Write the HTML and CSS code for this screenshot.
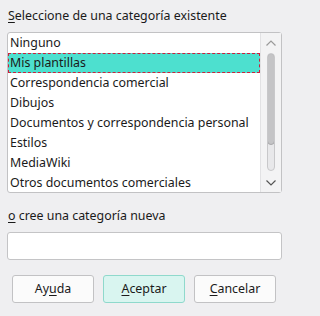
FILE: index.html
```html
<!DOCTYPE html>
<html lang="es">
<head>
<meta charset="utf-8">
<link rel="stylesheet" href="styles.css">
</head>
<body>
<div class="dialog">
  <div class="label label-top"><u>S</u>eleccione de una categoría existente</div>
  <div class="listbox">
    <ul class="items">
      <li class="item">Ninguno</li>
      <li class="item selected">Mis plantillas</li>
      <li class="item">Correspondencia comercial</li>
      <li class="item">Dibujos</li>
      <li class="item">Documentos y correspondencia personal</li>
      <li class="item">Estilos</li>
      <li class="item">MediaWiki</li>
      <li class="item">Otros documentos comerciales</li>
    </ul>
    <div class="scrollbar">
      <svg class="arrow" width="12" height="8" viewBox="0 0 12 8"><path d="M1.5 6.5 L6 2 L10.5 6.5" fill="none" stroke="#9a9a9a" stroke-width="1.2"/></svg>
      <div class="track"><div class="thumb"></div></div>
      <svg class="arrow" width="12" height="8" viewBox="0 0 12 8"><path d="M1.5 1.5 L6 6 L10.5 1.5" fill="none" stroke="#555" stroke-width="1.2"/></svg>
    </div>
  </div>
  <div class="label label-new"><u>o</u> cree una categoría nueva</div>
  <div class="input"></div>
  <div class="buttons">
    <div class="btn">Ay<u>u</u>da</div>
    <div class="btn primary"><u>A</u>ceptar</div>
    <div class="btn"><u>C</u>ancelar</div>
  </div>
</div>
</body>
</html>
```
FILE: styles.css
```css
html, body {
  margin: 0;
  padding: 0;
  background: #efeff1;
}
body {
  width: 291px;
  height: 316px;
  overflow: hidden;
  font-family: "Noto Sans", "DejaVu Sans", sans-serif;
  font-size: 12.4px;
  color: #1a1a1a;
}
.dialog {
  display: flex;
  flex-direction: column;
  padding: 0 9px 0 7px;
}
.label {
  line-height: 16px;
  padding-left: 1px;
}
.label u { text-underline-offset: 2px; }
.label-top { margin-top: 8px; height: 16px; margin-bottom: 8px; }
.listbox {
  display: flex;
  height: 159px;
  border: 1px solid #c2c2c4;
  border-radius: 3px;
  background: #fff;
}
.items {
  list-style: none;
  margin: 0;
  padding: 0;
  width: 253px;
}
.item {
  height: 20px;
  line-height: 19px;
  padding-left: 2px;
  white-space: nowrap;
  overflow: hidden;
  box-sizing: border-box;
}
.item.selected {
  background: #4de0cf;
  border: 1px dashed #cc1f3c;
  padding-left: 1px;
  line-height: 17px;
}
.scrollbar {
  width: 21px;
  background: #f3f3f4;
  border-left: 1px solid #e2e2e4;
  display: flex;
  flex-direction: column;
  align-items: center;
  padding: 6px 0 5px;
  box-sizing: border-box;
}
.arrow { display: block; flex: none; }
.track {
  flex: 1;
  width: 8px;
  margin: 6px 0 8px;
  box-sizing: border-box;
  background: #e8e8ea;
  border: 1px solid #c8c8ca;
  border-radius: 4px;
  overflow: hidden;
}
.thumb {
  height: 90px;
  margin: -1px;
  background: #c4c4c6;
  border: 1px solid #a8a8aa;
  border-radius: 4px;
}
.label-new { margin-top: 15px; height: 16px; }
.input {
  margin-top: 8px;
  height: 26px;
  background: #fff;
  border: 1px solid #c4c4c6;
  border-radius: 3px;
}
.buttons {
  display: flex;
  gap: 9px;
  margin-top: 15px;
  padding-left: 5px;
}
.btn {
  width: 80px;
  height: 26px;
  line-height: 26px;
  text-align: center;
  background: #fbfbfb;
  border: 1px solid #c2c2c4;
  border-radius: 3px;
}
.btn u { text-underline-offset: 2px; }
.btn.primary {
  background: #d9f5f0;
  border-color: #8fd9cc;
}
```
